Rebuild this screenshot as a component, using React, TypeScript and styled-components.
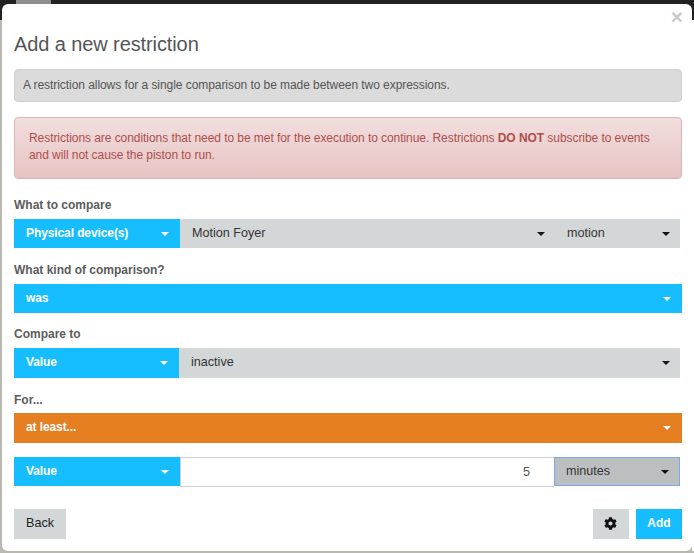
import React from "react";
import styled, { createGlobalStyle } from "styled-components";
import { FaCog } from "react-icons/fa";

const Global = createGlobalStyle`
  html, body { margin: 0; padding: 0; background: #b9b9b1; }
  body { font-family: "Liberation Sans", Arial, sans-serif; }
  * { box-sizing: border-box; }
`;

const Page = styled.div`
  position: relative;
  width: 694px;
  height: 553px;
  padding: 4px 2px 2px 2px;
  overflow: hidden;
  background:
    linear-gradient(#222, #222) top left / 100% 20px no-repeat,
    linear-gradient(#fff, #fff) top right / 2px 551px no-repeat,
    #b9b9b1;
`;

const TopTab = styled.div`
  position: absolute;
  top: 0;
  left: 16px;
  width: 35px;
  height: 4px;
  background: #8f8f8f;
`;

const Modal = styled.div`
  position: relative;
  height: 547px;
  padding: 0 10px 0 12px;
  background: #fff;
  border-radius: 6px;
  display: flex;
  flex-direction: column;
`;

const Close = styled.span`
  position: absolute;
  top: 2px;
  right: 9px;
  font-size: 21px;
  line-height: 21px;
  font-weight: 700;
  color: #c9c9c9;
`;

const Title = styled.h4`
  margin: 28px 0 0;
  font-size: 20px;
  line-height: 24px;
  font-weight: 400;
  letter-spacing: -0.1px;
  color: #555;
`;

const InfoBox = styled.div`
  margin-top: 13px;
  height: 33px;
  padding: 0 8px;
  border: 1px solid #d0d0d0;
  border-radius: 4px;
  background: #dbdbdb;
  color: #555;
  font-size: 12px;
  line-height: 31px;
  letter-spacing: -0.06px;
`;

const Alert = styled.div`
  margin-top: 15px;
  height: 62px;
  padding: 12px 14px;
  border: 1px solid #dcb5b7;
  border-radius: 4px;
  background: linear-gradient(#f2dede, #e7c3c3);
  color: #ad4f4d;
  font-size: 12px;
  line-height: 17px;
  letter-spacing: -0.06px;
`;

const Label = styled.div<{ $top: number }>`
  margin-top: ${(p) => p.$top}px;
  height: 15px;
  font-size: 12px;
  line-height: 15px;
  font-weight: 700;
  color: #5c5c5c;
`;

const Row = styled.div<{ $top: number; $height: number; $width?: number }>`
  display: flex;
  margin-top: ${(p) => p.$top}px;
  height: ${(p) => p.$height}px;
  width: ${(p) => p.$width ?? 666}px;
`;

const Select = styled.div<{ $bg: string; $fg: string; $width?: number; $bold?: boolean; $focus?: boolean }>`
  display: flex;
  align-items: center;
  justify-content: space-between;
  flex: ${(p) => (p.$width ? `0 0 ${p.$width}px` : "1 1 0")};
  min-width: 0;
  padding: ${(p) => (p.$focus ? "0 10px 2px 11px" : p.$bold ? "0 11px 2px 12px" : "0 10px 2px 12px")};
  background: ${(p) => p.$bg};
  color: ${(p) => p.$fg};
  font-size: ${(p) => (p.$bold ? "12px" : "12.6px")};
  letter-spacing: ${(p) => (p.$bold ? "-0.1px" : "0")};
  font-weight: ${(p) => (p.$bold ? 700 : 400)};
  border: ${(p) => (p.$focus ? "1px solid #7fa8e6" : "none")};
`;

const Caret = styled.i<{ $color: string }>`
  display: block;
  flex: none;
  width: 0;
  height: 0;
  margin-top: 2px;
  border-style: solid;
  border-width: 4px 4px 0 4px;
  border-color: ${(p) => p.$color} transparent transparent transparent;
`;

const NumberField = styled.div`
  flex: 1 1 0;
  height: 30px;
  display: flex;
  align-items: center;
  justify-content: flex-end;
  padding-right: 24px;
  border: 1px solid #cfcfcf;
  border-right: none;
  background: #fff;
  color: #555;
  font-size: 12.6px;
`;

const Footer = styled.div`
  display: flex;
  align-items: center;
  margin-top: 23px;
  width: 668px;
`;

const Button = styled.button<{ $primary?: boolean; $width: number }>`
  display: flex;
  align-items: center;
  justify-content: center;
  width: ${(p) => p.$width}px;
  height: 30px;
  padding: 0 0 2px;
  border: none;
  background: ${(p) => (p.$primary ? "#17beff" : "#d4d7d8")};
  color: ${(p) => (p.$primary ? "#fff" : "#222")};
  font-family: inherit;
  font-size: ${(p) => (p.$primary ? "12px" : "12.6px")};
  font-weight: ${(p) => (p.$primary ? 700 : 400)};
`;

const Spacer = styled.div`
  flex: 1;
`;

const GearButton = styled(Button)`
  margin-right: 7px;
  padding: 0 1px 1px 0;
  color: #111;
`;

const BLUE = "#17beff";
const GREY = "#d4d7d8";
const ORANGE = "#e67e22";

export default function App() {
  return (
    <>
      <Global />
      <Page>
        <TopTab />
        <Modal>
          <Close>×</Close>
          <Title>Add a new restriction</Title>
          <InfoBox>A restriction allows for a single comparison to be made between two expressions.</InfoBox>
          <Alert>
            Restrictions are conditions that need to be met for the execution to continue. Restrictions{" "}
            <b>DO NOT</b> subscribe to events and will not cause the piston to run.
          </Alert>

          <Label $top={19}>What to compare</Label>
          <Row $top={6} $height={29}>
            <Select $bg={BLUE} $fg="#fff" $width={166} $bold>
              Physical device(s)
              <Caret $color="#fff" />
            </Select>
            <Select $bg={GREY} $fg="#333">
              Motion Foyer
              <Caret $color="#111" />
            </Select>
            <Select $bg={GREY} $fg="#333" $width={125}>
              motion
              <Caret $color="#111" />
            </Select>
          </Row>

          <Label $top={15}>What kind of comparison?</Label>
          <Row $top={6} $height={29} $width={668}>
            <Select $bg={BLUE} $fg="#fff" $bold>
              was
              <Caret $color="#fff" />
            </Select>
          </Row>

          <Label $top={14}>Compare to</Label>
          <Row $top={6} $height={30}>
            <Select $bg={BLUE} $fg="#fff" $width={165} $bold>
              Value
              <Caret $color="#fff" />
            </Select>
            <Select $bg={GREY} $fg="#333">
              inactive
              <Caret $color="#111" />
            </Select>
          </Row>

          <Label $top={15}>For...</Label>
          <Row $top={5} $height={30} $width={668}>
            <Select $bg={ORANGE} $fg="#fff" $bold>
              at least...
              <Caret $color="#fff" />
            </Select>
          </Row>

          <Row $top={14} $height={29}>
            <Select $bg={BLUE} $fg="#fff" $width={166} $bold>
              Value
              <Caret $color="#fff" />
            </Select>
            <NumberField>5</NumberField>
            <Select $bg="#bcbfc0" $fg="#333" $width={126} $focus>
              minutes
              <Caret $color="#111" />
            </Select>
          </Row>

          <Footer>
            <Button $width={52}>Back</Button>
            <Spacer />
            <GearButton $width={36}>
              <FaCog size={13} />
            </GearButton>
            <Button $primary $width={46}>
              Add
            </Button>
          </Footer>
        </Modal>
      </Page>
    </>
  );
}
